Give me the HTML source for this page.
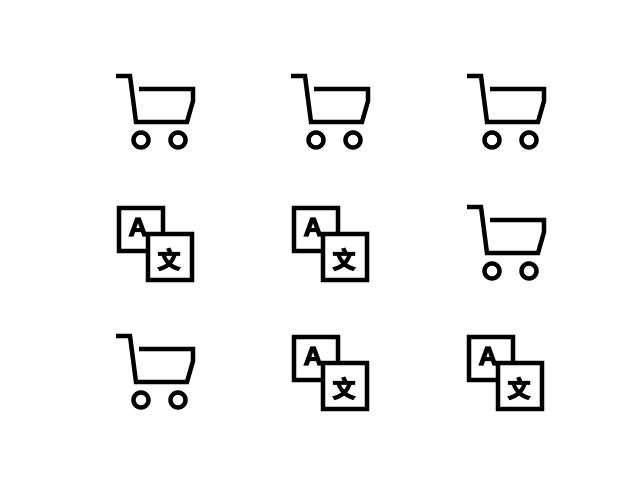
<!DOCTYPE html>
<html><head><meta charset="utf-8"><style>
html,body{margin:0;padding:0;background:#fff;width:640px;height:480px;overflow:hidden}
svg{display:block}
text{font-family:"Liberation Sans","Noto Sans CJK SC",sans-serif;font-weight:bold;fill:#000;stroke:#000;stroke-width:1.3;text-anchor:middle}
</style></head><body>
<svg width="640" height="480" viewBox="0 0 640 480" xmlns="http://www.w3.org/2000/svg">
<g fill="none" stroke="#000" stroke-width="4.5">
<g transform="translate(116,74)"><path d="M0 2H14L20 48H71L77 27V15H23"/><circle cx="25" cy="66" r="7.5"/><circle cx="62" cy="66" r="7.5"/></g>
<g transform="translate(291,74)"><path d="M0 2H14L20 48H71L77 27V15H23"/><circle cx="25" cy="66" r="7.5"/><circle cx="62" cy="66" r="7.5"/></g>
<g transform="translate(467,74)"><path d="M0 2H14L20 48H71L77 27V15H23"/><circle cx="25" cy="66" r="7.5"/><circle cx="62" cy="66" r="7.5"/></g>
<g transform="translate(467,205)"><path d="M0 2H14L20 48H71L77 27V15H23"/><circle cx="25" cy="66" r="7.5"/><circle cx="62" cy="66" r="7.5"/></g>
<g transform="translate(116,334)"><path d="M0 2H14L20 48H71L77 27V15H23"/><circle cx="25" cy="66" r="7.5"/><circle cx="62" cy="66" r="7.5"/></g>
</g>
<g transform="translate(117,206)">
<rect x="2" y="2" width="44" height="43" fill="#fff" stroke="#000" stroke-width="4.5"/>
<rect x="31" y="28" width="44" height="46" fill="#fff" stroke="#000" stroke-width="4.5"/>
<text x="21" y="30" font-size="26">A</text>
<text x="52" y="62" font-size="23">文</text>
</g>
<g transform="translate(292,206)">
<rect x="2" y="2" width="44" height="43" fill="#fff" stroke="#000" stroke-width="4.5"/>
<rect x="31" y="28" width="44" height="46" fill="#fff" stroke="#000" stroke-width="4.5"/>
<text x="21" y="30" font-size="26">A</text>
<text x="52" y="62" font-size="23">文</text>
</g>
<g transform="translate(292,335)">
<rect x="2" y="2" width="44" height="43" fill="#fff" stroke="#000" stroke-width="4.5"/>
<rect x="31" y="28" width="44" height="46" fill="#fff" stroke="#000" stroke-width="4.5"/>
<text x="21" y="30" font-size="26">A</text>
<text x="52" y="62" font-size="23">文</text>
</g>
<g transform="translate(467,335)">
<rect x="2" y="2" width="44" height="43" fill="#fff" stroke="#000" stroke-width="4.5"/>
<rect x="31" y="28" width="44" height="46" fill="#fff" stroke="#000" stroke-width="4.5"/>
<text x="21" y="30" font-size="26">A</text>
<text x="52" y="62" font-size="23">文</text>
</g>
</svg>
</body></html>
